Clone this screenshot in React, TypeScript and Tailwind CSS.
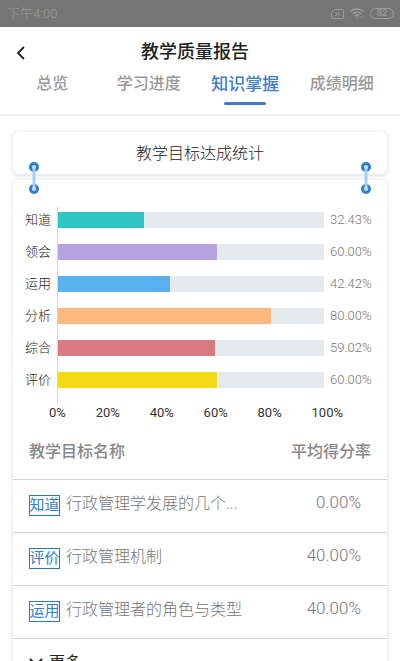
import { clsx } from "clsx";

interface Goal {
  label: string;
  value: number;
  color: string;
}

interface Row {
  tag: string;
  name: string;
  rate: number;
}

const tabs = ["总览", "学习进度", "知识掌握", "成绩明细"];
const activeTab = "知识掌握";

const goals: Goal[] = [
  { label: "知道", value: 32.43, color: "bg-[#2fc5c5]" },
  { label: "领会", value: 60, color: "bg-[#b5a2de]" },
  { label: "运用", value: 42.42, color: "bg-[#5ab1ed]" },
  { label: "分析", value: 80, color: "bg-[#feb981]" },
  { label: "综合", value: 59.02, color: "bg-[#d87a80]" },
  { label: "评价", value: 60, color: "bg-[#f4db16]" },
];

const ticks = ["0%", "20%", "40%", "60%", "80%", "100%"];

const rows: Row[] = [
  { tag: "知道", name: "行政管理学发展的几个...", rate: 0 },
  { tag: "评价", name: "行政管理机制", rate: 40 },
  { tag: "运用", name: "行政管理者的角色与类型", rate: 40 },
];

function StatusBar() {
  return (
    <div className="flex h-[27px] shrink-0 items-center justify-between bg-[#757575] pr-1.5 pl-[7px] text-[#9c9c9c]">
      <span className="text-[13px] leading-4 font-light">下午4:00</span>
      <div className="flex items-center gap-1.5">
        <svg width="13" height="10" viewBox="0 0 13 10" fill="none" stroke="currentColor">
          <path d="M3.500.5h8a1 1 0 0 1 1 1v7a1 1 0 0 1-1 1h-10a1 1 0 0 1-1-1v-5z" />
          <path d="M4.500 3l4 4M8.500 3l-4 4" />
        </svg>
        <svg width="14" height="11" viewBox="0 0 14 11" fill="none" stroke="currentColor" strokeWidth="1.300">
          <path d="M.6 3.600a9.200 9.200 0 0 1 12.800 0M2.600 5.900a6.300 6.300 0 0 1 8.800 0M4.700 8.100a3.300 3.300 0 0 1 4.600 0" />
          <circle cx="7" cy="9.700" r=".7" fill="currentColor" stroke="none" />
          <path d="M11 8v2.500M13 8v2.500" strokeWidth=".8" />
        </svg>
        <span className="flex h-[11px] w-6 items-center justify-center rounded-full border border-current text-[9px] leading-none font-medium">
          82
        </span>
      </div>
    </div>
  );
}

function Header() {
  return (
    <header className="shrink-0 border-b-2 border-[#f0f0f0]">
      <div className="grid h-12 grid-cols-[32px_1fr_42px] items-center">
        <button type="button" aria-label="返回" className="flex h-10 items-center pt-1 pl-4">
          <svg width="10" height="16" viewBox="0 0 10 16" fill="none" stroke="#222" strokeWidth="1.800">
            <path d="M8 2L2 8l6 6" />
          </svg>
        </button>
        <h1 className="pt-0.5 text-center text-lg leading-6 font-medium text-[#222]">教学质量报告</h1>
      </div>
      <nav className="grid h-[39px] grid-cols-4 items-start pt-px pr-2.5 pl-1">
        {tabs.map((tab) => (
          <a
            key={tab}
            href="#"
            className={clsx(
              "flex flex-col items-center leading-4",
              tab === activeTab
                ? "text-[17px] font-medium text-[#3f7ccb]"
                : "text-base leading-4 font-medium text-[#999]",
            )}
          >
            {tab}
            {tab === activeTab && <span className="mt-2.5 h-[3px] w-[42px] rounded-full bg-[#3f7ccb]" />}
          </a>
        ))}
      </nav>
    </header>
  );
}

// the pin that links the title card to the card under it
function Connector() {
  return (
    <svg width="12" height="34" viewBox="0 0 12 34">
      <circle cx="6" cy="6" r="5" fill="#2e7fc6" />
      <circle cx="6" cy="28" r="5" fill="#2e7fc6" />
      <path d="M6 6v22" stroke="#a5d2f3" strokeWidth="3" strokeLinecap="round" />
      <circle cx="6" cy="6" r="2" fill="#c3e2f8" />
      <circle cx="6" cy="28" r="2" fill="#c3e2f8" />
    </svg>
  );
}

function Chart() {
  return (
    <div className="px-3 pt-[27px]">
      <div className="relative">
        <div className="absolute top-0 -bottom-1 left-8 w-px bg-[#c9dada]" />
        {goals.map((goal) => (
          <div key={goal.label} className="flex h-8 items-center pb-1.5">
            <span className="w-8 text-[13px] leading-4 font-light text-[#222]">{goal.label}</span>
            <div className="h-4 flex-1 bg-[#e4ebed]">
              <div className={clsx("h-full", goal.color)} style={{ width: `${goal.value}%` }} />
            </div>
            <span className="w-[51px] pl-1.5 text-[13px] leading-4 font-light text-[#777]">
              {goal.value.toFixed(2)}%
            </span>
          </div>
        ))}
      </div>
      <div className="mt-1.5 flex justify-between pr-8 pl-6 text-[13px] leading-4 text-[#333]">
        {ticks.map((tick) => (
          <span key={tick}>{tick}</span>
        ))}
      </div>
    </div>
  );
}

function GoalTable() {
  return (
    <table className="mt-2 w-full border-collapse">
      <thead>
        <tr className="h-[50px] border-b border-[#cfd4d6] text-base text-[#888]">
          <th className="pb-1 pl-4 text-left font-medium">教学目标名称</th>
          <th className="pr-4 pb-1 text-right font-medium">平均得分率</th>
        </tr>
      </thead>
      <tbody>
        {rows.map((row) => (
          <tr key={row.tag} className="h-[53px] border-b border-[#cfd4d6]">
            <td className="pl-4">
              <div className="flex items-center gap-1.5">
                <span className="flex h-[21px] w-[31px] items-center justify-center border border-[#2b78bd] text-[15px] leading-none whitespace-nowrap text-[#2f80cf]">
                  {row.tag}
                </span>
                <span className="pb-1 text-base leading-6 font-light text-[#777]">{row.name}</span>
              </div>
            </td>
            <td className="pr-[26px] pb-2 text-right text-[17px] leading-6 font-light text-[#777]">
              {row.rate.toFixed(2)}%
            </td>
          </tr>
        ))}
      </tbody>
    </table>
  );
}

export default function App() {
  return (
    <div className="flex h-screen flex-col overflow-hidden bg-white font-[Roboto,'Noto_Sans_CJK_SC',sans-serif]">
      <StatusBar />
      <Header />
      <main className="flex-1 overflow-y-auto px-[13px] pt-4 [scrollbar-width:none]">
        <section className="relative">
          <h2 className="rounded-md bg-white pt-2.5 pb-2 text-center text-base leading-6 font-light text-[#222] shadow-[0_1px_4px_1px_#dfe5ea]">
            教学目标达成统计
          </h2>
          <div className="absolute inset-x-[15px] top-[29px] z-10 flex justify-between">
            <Connector />
            <Connector />
          </div>
        </section>
        <section className="mt-1.5 rounded-md bg-white pb-4 shadow-[0_1px_4px_1px_#dfe5ea]">
          <Chart />
          <GoalTable />
          <button type="button" className="flex items-center gap-1.5 px-4 pt-3 text-base leading-6 text-[#222]">
            <svg width="14" height="9" viewBox="0 0 14 9" fill="none" stroke="currentColor" strokeWidth="2">
              <path d="M1 1l6 6 6-6" />
            </svg>
            更多
          </button>
        </section>
      </main>
    </div>
  );
}
